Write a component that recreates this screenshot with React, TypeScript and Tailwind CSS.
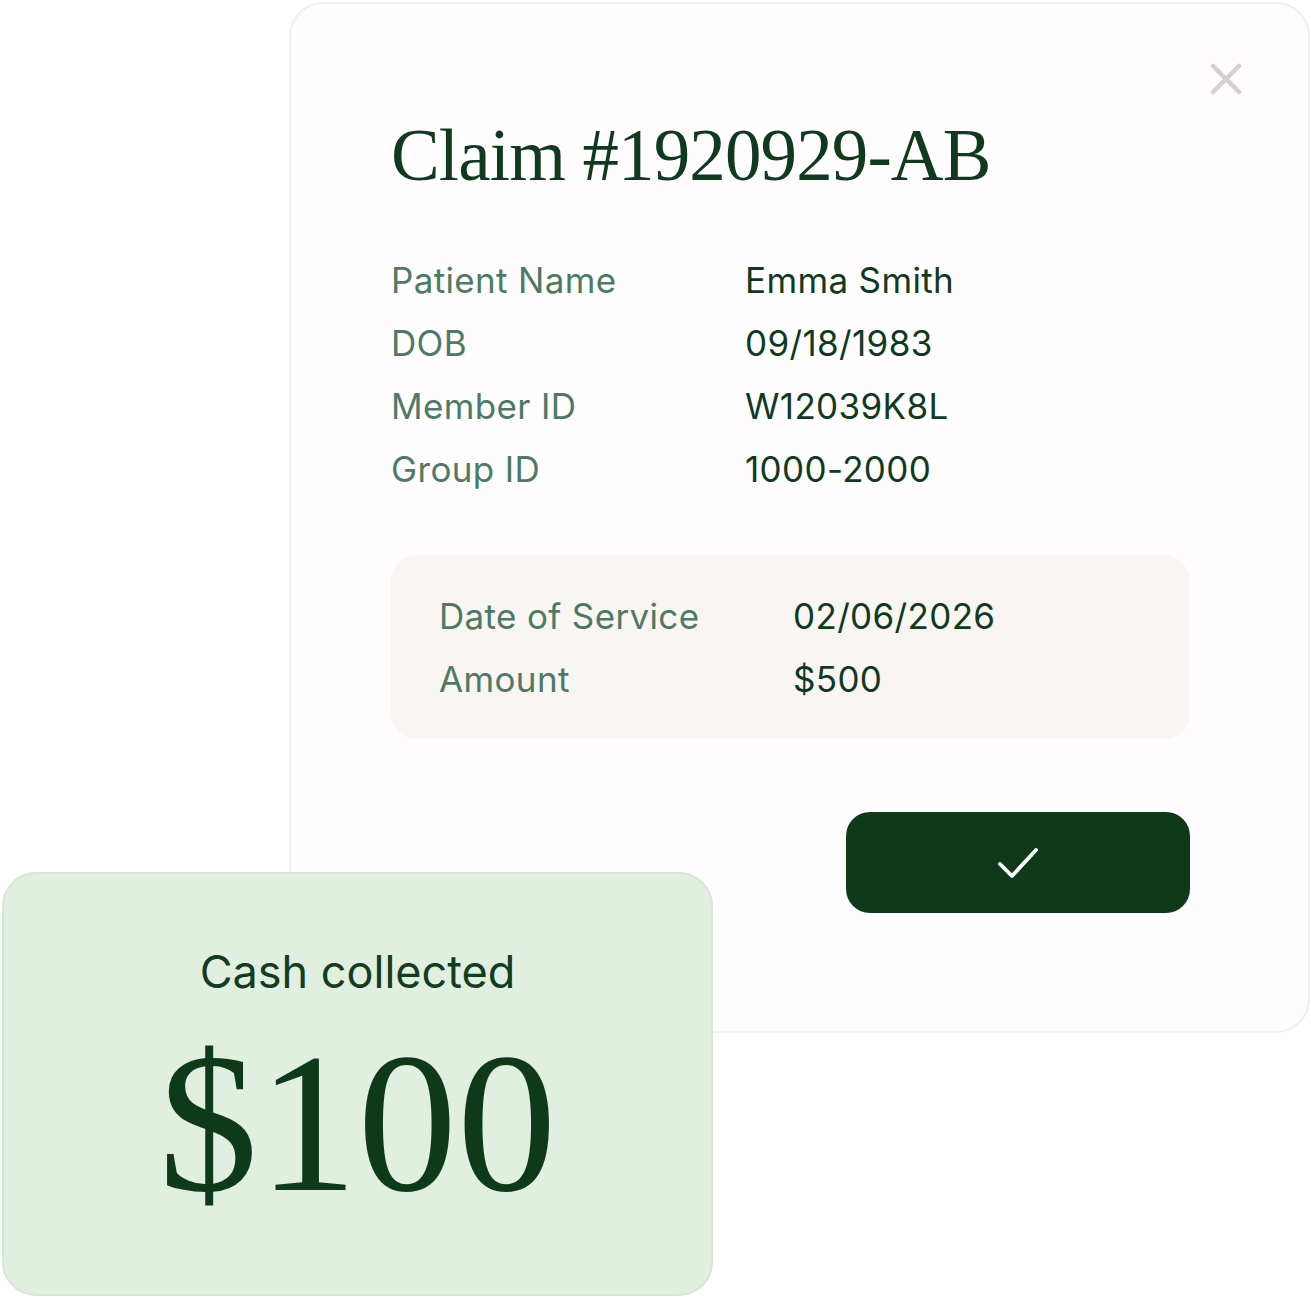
import React from 'react';

const sans = { fontFamily: 'Inter, "Liberation Sans", sans-serif' };
const serif = { fontFamily: '"Liberation Serif", "Times New Roman", serif' };

const patientRows = [
  ['Patient Name', 'Emma Smith'],
  ['DOB', '09/18/1983'],
  ['Member ID', 'W12039K8L'],
  ['Group ID', '1000-2000'],
];

const serviceRows = [
  ['Date of Service', '02/06/2026'],
  ['Amount', '$500'],
];

const Row: React.FC<{ label: string; value: string }> = ({ label, value }) => (
  <div className="flex leading-[63px] text-[35px] tracking-[0.01em]" style={sans}>
    <span className="w-[354px] shrink-0 text-[#4e7a63]">{label}</span>
    <span className="text-[#0f3a1e]">{value}</span>
  </div>
);

export default function App() {
  return (
    <div className="w-[1311px] h-[1299px] bg-white overflow-hidden">
      {/* Claim card */}
      <div className="relative ml-[289px] mt-[2px] w-[1021px] h-[1031px] rounded-[34px] border-2 border-[#f1efef] bg-[#fffcfd] pl-[100px] pt-[102px]">
        <button className="absolute right-[64px] top-[57px] w-[36px] h-[36px] flex items-center justify-center">
          <svg width="32" height="32" viewBox="0 0 32 32" fill="none" stroke="#d3d0d0" strokeWidth="4.5" strokeLinecap="round">
            <path d="M3 3 L29 29 M29 3 L3 29" />
          </svg>
        </button>

        <h1 className="text-[73px] leading-[100px] text-[#0f3a1d] tracking-[-0.012em]" style={serif}>
          Claim #1920929-AB
        </h1>

        <div className="mt-[43px] flex flex-col">
          {patientRows.map(([l, v]) => (
            <Row key={l} label={l} value={v} />
          ))}
        </div>

        <div className="mt-[54px] w-[799px] rounded-[26px] bg-[#f8f5f2] pl-[48px] pt-[30px] pb-[28px]">
          {serviceRows.map(([l, v]) => (
            <Row key={l} label={l} value={v} />
          ))}
        </div>

        <div className="w-[799px] flex justify-end mt-[73px]">
          <button className="w-[344px] h-[101px] rounded-[24px] bg-[#0f3a1a] flex items-center justify-center">
            <svg width="42" height="34" viewBox="0 0 42 34" fill="none" stroke="#ffffff" strokeWidth="3.8" strokeLinecap="round" strokeLinejoin="round">
              <path d="M3 18 L15 30 L39 4" />
            </svg>
          </button>
        </div>
      </div>

      {/* Cash collected card */}
      <div className="relative z-10 -mt-[161px] ml-[2px] w-[711px] h-[424px] rounded-[34px] border-2 border-[#d6e6d5] bg-[#e0efdf] flex flex-col items-center">
        <div className="mt-[70px] text-[45px] leading-[56px] text-[#123d1e]" style={sans}>
          Cash collected
        </div>
        <div className="mt-[23px] text-[199px] leading-[200px] text-[#0f3a1a]" style={serif}>
          $100
        </div>
      </div>
    </div>
  );
}
